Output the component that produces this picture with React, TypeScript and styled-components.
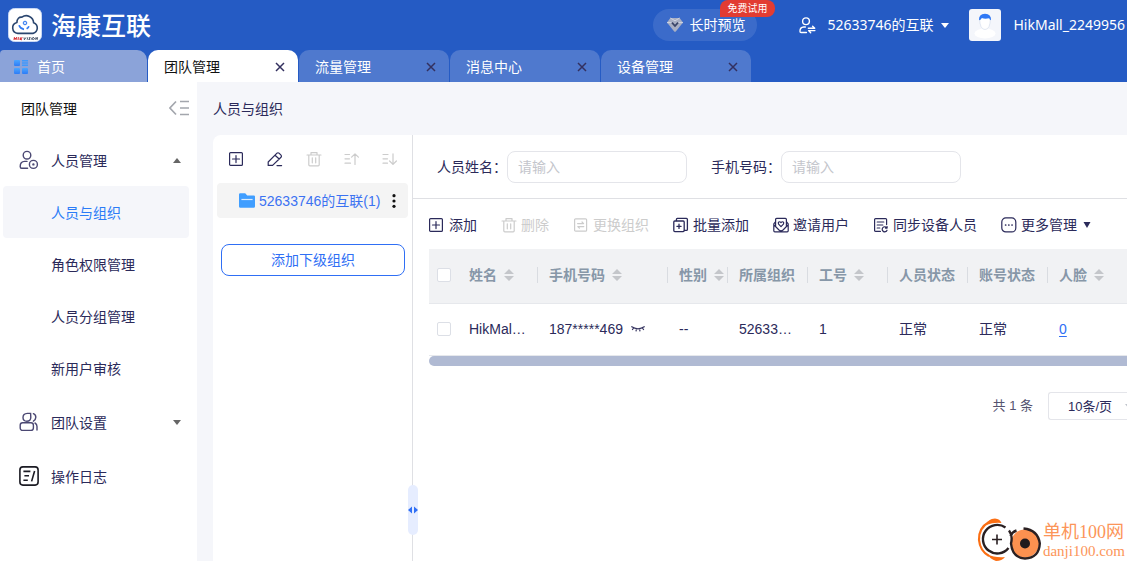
import React from "react";
import styled, { createGlobalStyle, css } from "styled-components";

const color = {
  brand: "#255bc4",
  primary: "#2f6ff5",
  ink: "#2b2a5a",
  page: "#f5f6fa",
  line: "#dfe0e4",
  disabled: "#cccccc",
  heading: "#8797a8",
};

const uiFont = '"Noto Sans", "Noto Sans CJK SC", sans-serif';
const dataFont = '"Liberation Sans", "Noto Sans CJK SC", sans-serif';

const GlobalStyle = createGlobalStyle`
  *, *::before, *::after { box-sizing: border-box; }
  body {
    margin: 0;
    font-family: ${dataFont};
    font-size: 14px;
    line-height: 20px;
    color: ${color.ink};
    background: ${color.page};
  }
  button, input, select {
    font: inherit;
    color: inherit;
    margin: 0;
  }
  button {
    padding: 0;
    border: 0;
    background: none;
    white-space: nowrap;
    cursor: pointer;
  }
  button:disabled { cursor: default; }
  svg { display: block; flex: none; }
`;

/* ---------- Icons ---------- */

type IconProps = { size?: number; children: React.ReactNode; weight?: number };

const LineIcon = ({ size = 16, weight = 1.2, children }: IconProps) => (
  <svg
    width={size}
    height={size}
    viewBox="0 0 16 16"
    fill="none"
    stroke="currentColor"
    strokeWidth={weight}
    strokeLinecap="round"
    strokeLinejoin="round"
    aria-hidden="true"
  >
    {children}
  </svg>
);

const AddIcon = () => (
  <LineIcon weight={1.2}>
    <rect x=".6" y="1.600" width="12.800" height="12.800" rx="1" />
    <path d="M7 4.600v7M3.500 8h7" />
  </LineIcon>
);

const EditIcon = () => (
  <LineIcon>
    <path d="M1.2 14.4V11L10 2.2a1.4 1.4 0 0 1 2 0l2 2a1.4 1.4 0 0 1 0 2L5.6 14.4zM8 4.2 12.2 8M10 14.6h4.6" />
  </LineIcon>
);

const TrashIcon = () => (
  <LineIcon>
    <path d="M1 4h14M5 3.800V1.600h6v2.200M2.800 4.200v9.600q0 1 1 1h8.400q1 0 1-1V4.200M6.300 6.800v5M9.700 6.800v5" />
  </LineIcon>
);

const MoveUpIcon = () => (
  <LineIcon>
    <path d="M1 3.5h4.5M1 7.8h4.5M1 12.2h5.5M11 13.4V2.8M7.6 6.2 11 2.8l3.4 3.4" />
  </LineIcon>
);

const MoveDownIcon = () => (
  <LineIcon>
    <path d="M1 3.5h5M1 7.8h4.5M1 12.2h4.5M11 2.8v10.6M7.6 10l3.4 3.4 3.4-3.4" />
  </LineIcon>
);

const SwapIcon = () => (
  <LineIcon>
    <rect x="1.6" y="1.8" width="12" height="12.4" rx="1" />
    <path d="M4.6 6.6h6L9 5M10.8 9.6h-6l1.6 1.5" />
  </LineIcon>
);

const BatchIcon = () => (
  <LineIcon weight={1.3}>
    <rect x=".8" y="4" width="10.400" height="10.600" rx="1" />
    <path d="M3.400 3.600V2.400q0-1 1-1h9q1 0 1 1v10q0 1-1 1h-2M6 7.200v4.200M3.900 9.300h4.200" />
  </LineIcon>
);

const InviteIcon = () => (
  <LineIcon>
    <path d="M2.600 9V2.400q0-1 1-1h8.800q1 0 1 1V9M2.400 5 .8 6.800v7q0 1 1 1h12.400q1 0 1-1v-7L13.600 5M1 8l5 5q2 1.800 4 0l5-5" />
    <path d="M8 9.600 5.600 7.200q-.8-1.300.2-2.200 1.100-.7 2.200.6 1.100-1.300 2.200-.6 1 .9.200 2.200z" />
  </LineIcon>
);

const SyncIcon = () => (
  <LineIcon>
    <path d="M7.400 14.400H2.600q-1 0-1-1V2.600q0-1 1-1h10q1 0 1 1v5M4.200 5h6.600M4.200 8h5.600M4.200 11h2.600" />
    <path d="M13.700 10.800a2.500 2.500 0 1 0 .3 2.400M14.100 9.600v1.500h-1.600" />
  </LineIcon>
);

const MoreIcon = () => (
  <LineIcon>
    <rect x=".8" y=".9" width="14" height="14" rx="4" />
    <path d="M4.6 8h.1M7.8 8h.1M11 8h.1" strokeWidth="1.7" />
  </LineIcon>
);

const CloseIcon = () => (
  <svg width="10" height="10" viewBox="0 0 10 10" stroke="#33305f" strokeWidth="1.5" aria-hidden="true">
    <path d="M1 1l8 8M9 1l-8 8" />
  </svg>
);

const HomeIcon = () => (
  <svg width="14" height="14" viewBox="0 0 14 14" aria-hidden="true">
    <defs>
      <linearGradient id="homeFill" x1="0" y1="0" x2="0" y2="1">
        <stop offset="0" stopColor="#4ba6ff" />
        <stop offset="1" stopColor="#2e7cf6" />
      </linearGradient>
    </defs>
    <g fill="url(#homeFill)">
      <rect width="6" height="6" rx="1" />
      <rect y="8" width="6" height="6" rx="1" />
      <rect x="8" y="8" width="6" height="6" rx="1" />
    </g>
    <path d="M8 .8h6M8 3h6M8 5.2h6" stroke="#4199fb" strokeWidth="1.4" />
  </svg>
);

const Caret = ({ up = false, width = 8 }: { up?: boolean; width?: number }) => (
  <svg width={width} height="5" viewBox="0 0 8 5" preserveAspectRatio="none" fill="currentColor" aria-hidden="true">
    <path d={up ? "M0 5 4 0l4 5z" : "M0 0h8L4 5z"} />
  </svg>
);

const DownMark = () => (
  <svg width="8" height="6" viewBox="0 0 8 6" fill="currentColor" aria-hidden="true">
    <path d="M.5 0h7L4 6z" />
  </svg>
);

const SortIcon = () => (
  <svg width="10" height="12" viewBox="0 0 10 12" fill="#c4c6ca" aria-hidden="true">
    <path d="M0 5 5 0l5 5zM0 7h10l-5 5z" />
  </svg>
);

const BrandMark = () => (
  <svg width="34" height="34" viewBox="0 0 34 34" aria-hidden="true">
    <rect x=".5" y=".5" width="33" height="33" rx="6" fill="#fff" stroke="#c9d8f4" />
    <path
      d="M9.800 25.400a5.600 5.600 0 0 1-.9-11c.1-3.600 2.300-5.600 5-5.200a7.300 7.300 0 0 1 11.700 5.500 5.600 5.600 0 0 1-.6 10.700z"
      fill="none"
      stroke="#2b466f"
      strokeWidth="1.600"
    />
    <path d="M11 17.200a6.400 6.400 0 0 0 5 4.100M18.600 20.800q1.700-1 2.300-2.600" fill="none" stroke="#2f78f0" strokeWidth="1.700" />
    <circle cx="17" cy="15" r="1.800" fill="#cfe1ff" stroke="#2f78f0" />
    <path d="M6.500 29.200 6 32M8.600 29.200 8 32M6.400 30.600h2M10.400 29.200 10 32M12.400 29.400 12 32M14.400 29.400 12.400 31l1.400 1" stroke="#d8343c" strokeWidth="1.100" fill="none" />
    <path d="M16 29.400l.4 2.400 1.600-2.400M19.600 29.400l-.4 2.400M22.600 29.600h-1.400l.8 1.800h-1.600M24 29.600l-.4 2M26 29.800a1 1 0 1 0 .1.1M27.600 31.800l.4-2.400 1.200 2.200.4-2.400" stroke="#3f4d63" strokeWidth=".9" fill="none" />
  </svg>
);

const DiamondIcon = () => (
  <svg width="16" height="16" viewBox="0 0 16 16" aria-hidden="true">
    <path d="M3.400 1h9.200L16 5.600 8.800 14.400q-.8.800-1.600 0L0 5.600z" fill="#a9b0c4" />
    <path d="M3.400 1 8 3.800 12.600 1M0 5.600h4.400M11.600 5.600H16" stroke="#cfd4e2" fill="none" />
    <path d="M5 5.600 8 9l3-3.400" stroke="#3a4568" strokeWidth="1.700" fill="none" />
  </svg>
);

const SwitchUserIcon = () => (
  <LineIcon size={17} weight={1.3}>
    <circle cx="6.6" cy="4" r="3.2" />
    <path d="M6 9.4H4.4Q1 9.6.9 13.4q0 1.2 1 1.2H7M8.8 10.6h6l-2-2M15 12.8H9l2 2" />
  </LineIcon>
);

const AvatarArt = () => (
  <svg width="32" height="32" viewBox="0 0 32 32" aria-hidden="true">
    <rect width="32" height="32" rx="3" fill="#f4f6fb" />
    <ellipse cx="16" cy="24.500" rx="10.500" ry="5" fill="#fff" />
    <path d="M10.600 9.500q.2 11 5.400 11t5.400-11q-5.400-3.500-10.800 0z" fill="#fff" stroke="#dbe2ef" strokeWidth=".8" />
    <path d="M10 11.200Q9.600 5 16 4.800 22.400 5 22 11.200q-1.400-.4-1.800-2-4.200 1-7.400-.2-.6 1.900-2.800 2.200z" fill="#2f78f5" />
  </svg>
);

const PeopleGearIcon = () => (
  <svg width="20" height="20" viewBox="0 0 20 20" fill="none" stroke="#4b4873" strokeWidth="1.4" strokeLinecap="round" aria-hidden="true">
    <circle cx="8" cy="5.200" r="3.800" />
    <path d="M8 11.400H5.600Q1.200 11.600 1.200 16.400q0 1.800 1.400 1.800h6" />
    <circle cx="14.400" cy="14.400" r="4" />
    <circle cx="14.400" cy="14.400" r=".5" fill="#4b4873" />
  </svg>
);

const TeamIcon = () => (
  <svg width="20" height="20" viewBox="0 0 20 20" fill="none" stroke="#4b4873" strokeWidth="1.400" strokeLinecap="round" aria-hidden="true">
    <path d="M11.600 1.400H8.400Q4 1.600 4 5.400t3.800 3.800q4 0 4-4z" />
    <rect x="1.200" y="10.800" width="13.200" height="7.600" rx="2.400" />
    <path d="M14.400 1.600q2.600 1 2.400 3.800-.2 2.600-2.400 3.800M16 11q2 1 2 3.600V18" />
  </svg>
);

const LogIcon = () => (
  <svg width="20" height="20" viewBox="0 0 20 20" fill="none" stroke="#1c1c24" strokeWidth="1.600" aria-hidden="true">
    <rect x=".9" y=".9" width="18.200" height="18.200" rx="3" />
    <path d="M4.400 5.400h7M5.400 9.800h4.600M4.400 14.200h4.400M15.600 5l-3 10.400" />
  </svg>
);

const CollapseIcon = () => (
  <svg width="20" height="16" viewBox="0 0 20 16" fill="none" stroke="#a3a6ad" strokeWidth="1.700" aria-hidden="true">
    <path d="M7 1.500.9 8 7 14.500M11 1.500h9M11 8h9M11 14.500h9" />
  </svg>
);

const FolderIcon = () => (
  <svg width="16" height="15" viewBox="0 0 16 15" aria-hidden="true">
    <path d="M1.200.2h5l2 2.200h6.600q1.200 0 1.200 1.200v9.800q0 1.400-1.400 1.400H1.400Q0 14.800 0 13.400V1.400Q0 .2 1.200.2z" fill="#409eff" />
    <path d="M2.400 6.500h11.200" stroke="#d9ecff" strokeWidth="1.200" />
  </svg>
);

const DotsIcon = () => (
  <svg width="4" height="14" viewBox="0 0 4 14" fill="#111" aria-hidden="true">
    <circle cx="2" cy="1.700" r="1.600" />
    <circle cx="2" cy="7" r="1.600" />
    <circle cx="2" cy="12.300" r="1.600" />
  </svg>
);

const ClosedEyeIcon = () => (
  <svg width="14" height="6" viewBox="0 0 14 6" fill="none" stroke="#35335f" strokeWidth="1.200" aria-hidden="true">
    <path d="M.3.6q6.700 4.400 13.400 0M2.600 2 1.200 4M5.400 2.800 5 5.400M8.600 2.800 9 5.400M11.400 2l1.400 2" />
  </svg>
);

const SplitArrows = () => (
  <svg width="10" height="8" viewBox="0 0 10 8" fill="#2f6ff5" aria-hidden="true">
    <path d="M4 .5v7L0 4zM6 .5v7L10 4z" />
  </svg>
);

const WatermarkArt = () => (
  <svg width="64" height="44" viewBox="0 0 64 44" fill="none" aria-hidden="true">
    <path d="M12 5Q1.500 11 2 23q1 11 10 16" stroke="#fb6f14" strokeWidth="2.200" />
    <path d="M9 8q2-6 9-6.400 5 .4 6.500 4.400-7-1-15.500 2zM10 37q8 4 18 3-3 4-9 4-6-2-9-7z" fill="#fb6f14" />
    <path d="M28.500 10.500A14.300 14.300 0 1 0 31.500 31" stroke="#2a2022" strokeWidth="2.400" />
    <circle cx="48" cy="26.500" r="14" fill="#fc9150" />
    <path d="M32 13.500q4 5 2 13 1.500 14.500 14 15 14-.5 14.800-15Q61 13 46.500 11.500M33.500 19q1.500-4 6-5.500" stroke="#2a2022" strokeWidth="2.400" />
    <path d="M20 17.500v10M15 22.500h10" stroke="#2a2022" strokeWidth="1.600" />
    <circle cx="48" cy="26.500" r="5" fill="#221b1d" />
  </svg>
);

/* ---------- Shell ---------- */

const Page = styled.div`
  position: relative;
  display: flex;
  flex-direction: column;
  min-height: 100vh;
  overflow: hidden;
`;

const TopBar = styled.header`
  display: flex;
  align-items: center;
  height: 50px;
  padding: 0 2px 0 8px;
  color: #fff;
  background: ${color.brand};
  font-family: ${uiFont};
  white-space: nowrap;
`;

const BrandName = styled.h1`
  flex: 1;
  margin: 0 0 0 9px;
  font-size: 25px;
  line-height: 32px;
  font-weight: 500;
`;

const Preview = styled.button`
  position: relative;
  display: flex;
  align-items: center;
  gap: 6px;
  height: 32px;
  margin-right: 42px;
  padding: 0 12px 0 14px;
  border-radius: 16px;
  background: rgba(255, 255, 255, 0.1);
`;

const TrialBadge = styled.span`
  position: absolute;
  top: -9px;
  right: -18px;
  height: 17px;
  padding: 0 8px 0 7px;
  border-radius: 8px 8px 8px 0;
  background: #e23c32;
  font-size: 10px;
  line-height: 17px;
`;

const TeamSwitch = styled.button`
  display: flex;
  align-items: center;
  gap: 8px;
  margin-right: 20px;

  svg:first-child { margin-right: 3px; }
`;

const Account = styled.a`
  display: flex;
  align-items: center;
  gap: 12px;
  color: inherit;
  text-decoration: none;
`;

const TabBar = styled.nav`
  display: flex;
  gap: 1px;
  height: 32px;
  background: ${color.brand};
  font-family: ${uiFont};
`;

const Tab = styled.div<{ $kind?: "home" | "active" }>`
  display: flex;
  align-items: center;
  justify-content: space-between;
  width: 150px;
  padding: 2px 13px 0 16px;
  border-radius: 10px 10px 0 0;
  color: #fff;
  background: #4f79ce;

  ${({ $kind }) =>
    $kind === "home" &&
    css`
      justify-content: flex-start;
      gap: 9px;
      width: 147px;
      padding-left: 14px;
      border-radius: 4px 10px 0 0;
      background: #8ba3d9;
    `}
  ${({ $kind }) =>
    $kind === "active" &&
    css`
      color: #111;
      background: #fff;
    `}
`;

const TabLink = styled.a`
  color: inherit;
  text-decoration: none;
`;

const Body = styled.div`
  display: flex;
  flex: 1;
  min-width: 0;
`;

/* ---------- Sidebar ---------- */

const Sidebar = styled.aside`
  flex: none;
  width: 197px;
  padding: 0 8px 0 3px;
  background: #fff;
`;

const SidebarTitle = styled.div`
  display: flex;
  align-items: center;
  justify-content: space-between;
  height: 52px;
  padding-left: 18px;
  color: #111;

  span { padding-top: 2px; }
`;

const MenuGroup = styled.button`
  display: flex;
  align-items: center;
  width: 100%;
  height: 52px;
  margin-bottom: 2px;
  padding: 0 8px 0 16px;

  span {
    flex: 1;
    padding: 2px 0 0 12px;
    text-align: left;
  }
  > svg:last-child:not(:first-child) { color: #666; }
`;

const SubMenu = styled.div`
  margin: -2px 0 2px;
`;

const SubItem = styled.a<{ $active?: boolean }>`
  display: block;
  padding: 17px 0 15px 48px;
  border-radius: 4px;
  color: ${({ $active }) => ($active ? "#2b7cf7" : color.ink)};
  background: ${({ $active }) => ($active ? color.page : "transparent")};
  text-decoration: none;
`;

/* ---------- Workspace ---------- */

const Workspace = styled.main`
  display: flex;
  flex: 1;
  flex-direction: column;
  min-width: 0;
  padding-left: 16px;
`;

const Crumb = styled.h2`
  margin: 0;
  padding: 17px 0 16px;
  font-size: 14px;
  line-height: 20px;
  font-weight: 400;
`;

const Panels = styled.div`
  display: flex;
  flex: 1;
  min-width: 0;
  border-radius: 8px 0 0 0;
  background: #fff;
`;

const TreePanel = styled.section`
  position: relative;
  flex: none;
  width: 200px;
  border-right: 1px solid ${color.line};
`;

const TreeTools = styled.div`
  display: flex;
  justify-content: space-between;
  height: 48px;
  padding: 0 14px 0 16px;
`;

const IconButton = styled.button`
  display: flex;
  align-items: center;

  &:disabled { color: ${color.disabled}; }
`;

const TreeNode = styled.div`
  display: flex;
  align-items: center;
  gap: 4px;
  height: 35px;
  margin: 0 4px;
  padding: 0 12px 0 22px;
  border-radius: 4px;
  color: #3b72f2;
  background: #f4f4f4;
  white-space: nowrap;

  span { flex: 1; }
`;

const AddChild = styled.button`
  display: block;
  width: 184px;
  height: 32px;
  margin: 26px 8px 0;
  border: 1px solid ${color.primary};
  border-radius: 8px;
  color: ${color.primary};
`;

const SplitHandle = styled.button`
  position: absolute;
  right: -6px;
  bottom: 26px;
  display: flex;
  align-items: center;
  width: 10px;
  height: 50px;
  border-radius: 5px;
  background: #e6edff;
`;

const ListPanel = styled.section`
  flex: 1;
  min-width: 0;
`;

const Filters = styled.form`
  display: flex;
  gap: 24px;
  padding: 16px 24px 15px;
  border-bottom: 1px solid ${color.line};
`;

const Field = styled.label`
  display: flex;
  align-items: center;
  white-space: nowrap;
`;

const TextBox = styled.input`
  width: 180px;
  height: 32px;
  padding: 0 10px;
  border: 1px solid #e4e5ea;
  border-radius: 8px;
  background: #fff;

  &::placeholder { color: #c4c6cc; opacity: 1; }
`;

const Actions = styled.div`
  display: flex;
  gap: 24px;
  height: 50px;
  padding: 2px 0 0 16px;
`;

const Action = styled.button`
  display: flex;
  align-items: center;
  gap: 4px;

  &:disabled { color: ${color.disabled}; }
  svg:nth-of-type(2) { margin-left: 2px; }
`;

const TableWrap = styled.div`
  margin-left: 16px;
  overflow: hidden;
`;

const Table = styled.table`
  width: 100%;
  border-collapse: separate;
  border-spacing: 0;
  table-layout: fixed;
`;

const Th = styled.th<{ $w?: number }>`
  width: ${({ $w }) => ($w ? `${$w}px` : "auto")};
  height: 55px;
  padding: 0 0 2px;
  border-bottom: 1px solid #e6e8ec;
  color: ${color.heading};
  background: #f1f2f4;
`;

const ThInner = styled.div<{ $bar: boolean }>`
  display: flex;
  align-items: center;
  gap: 7px;
  height: 16px;
  padding-left: 11px;
  border-left: 1px solid ${({ $bar }) => ($bar ? "#d9dce1" : "transparent")};
  white-space: nowrap;
`;

const Td = styled.td`
  height: 52px;
  padding: 0 0 2px 12px;
  border-bottom: 1px solid #e6e8ec;
  white-space: nowrap;
`;

const CheckTd = styled(Td)`
  padding-left: 8px;
`;

const CheckTh = styled(Th)`
  padding-left: 8px;
`;

const Check = styled.input.attrs({ type: "checkbox" })`
  display: block;
  appearance: none;
  width: 14px;
  height: 14px;
  border: 1px solid #dcdfe6;
  border-radius: 2px;
  background: #fff;
`;

const Phone = styled.div`
  display: flex;
  align-items: center;
  gap: 8px;
`;

const CountLink = styled.a`
  color: ${color.primary};
  text-underline-offset: 2px;
`;

const ScrollThumb = styled.div`
  height: 10px;
  border-radius: 5px 0 0 5px;
  background: #b0bad3;
`;

const Pager = styled.footer`
  display: flex;
  align-items: center;
  justify-content: flex-end;
  gap: 15px;
  padding-top: 26px;
  font-size: 13px;
  color: #55536f;
`;

const PageSize = styled.div`
  position: relative;
  width: 79px;
  height: 28px;
  overflow: hidden;
  color: #c0c4cc;

  select {
    appearance: none;
    width: 100%;
    height: 28px;
    padding: 2px 0 0 19px;
    border: 1px solid #e4e5ea;
    border-right: 0;
    border-radius: 3px 0 0 3px;
    color: ${color.ink};
    background: #fff;
  }
  svg {
    position: absolute;
    top: 12px;
    right: -6px;
  }
`;

const Watermark = styled.div`
  position: absolute;
  right: 2px;
  bottom: 0;
  display: flex;
  align-items: center;
  gap: 2px;
  color: #fc9559;
  font-family: "Liberation Serif", "Noto Sans CJK SC", serif;
  white-space: nowrap;
`;

const WatermarkText = styled.div`
  padding-top: 4px;
  font-size: 18px;
  line-height: 20px;

  small {
    display: block;
    font-size: 15px;
    line-height: 18px;
  }
`;

/* ---------- Data ---------- */

const tabs = ["团队管理", "流量管理", "消息中心", "设备管理"];
const subItems = ["人员与组织", "角色权限管理", "人员分组管理", "新用户审核"];

const treeTools = [
  { label: "新增", icon: <AddIcon /> },
  { label: "编辑", icon: <EditIcon /> },
  { label: "删除组织", icon: <TrashIcon />, disabled: true },
  { label: "上移", icon: <MoveUpIcon />, disabled: true },
  { label: "下移", icon: <MoveDownIcon />, disabled: true },
];

const actions = [
  { label: "添加", icon: <AddIcon /> },
  { label: "删除", icon: <TrashIcon />, disabled: true },
  { label: "更换组织", icon: <SwapIcon />, disabled: true },
  { label: "批量添加", icon: <BatchIcon /> },
  { label: "邀请用户", icon: <InviteIcon /> },
  { label: "同步设备人员", icon: <SyncIcon /> },
  { label: "更多管理", icon: <MoreIcon />, menu: true },
];

const columns = [
  { label: "姓名", width: 80, sort: true },
  { label: "手机号码", width: 130, sort: true },
  { label: "性别", width: 60, sort: true },
  { label: "所属组织", width: 80 },
  { label: "工号", width: 80, sort: true },
  { label: "人员状态", width: 80 },
  { label: "账号状态", width: 80 },
  { label: "人脸", sort: true },
];

export default function App() {
  return (
    <Page>
      <GlobalStyle />
      <TopBar>
        <BrandMark />
        <BrandName>海康互联</BrandName>
        <Preview>
          <DiamondIcon />
          长时预览
          <TrialBadge>免费试用</TrialBadge>
        </Preview>
        <TeamSwitch>
          <SwitchUserIcon />
          52633746的互联
          <Caret />
        </TeamSwitch>
        <Account href="#account">
          <AvatarArt />
          HikMall_2249956
        </Account>
      </TopBar>
      <TabBar>
        <Tab $kind="home">
          <HomeIcon />
          <TabLink href="#home">首页</TabLink>
        </Tab>
        {tabs.map((name, i) => (
          <Tab key={name} $kind={i === 0 ? "active" : undefined}>
            <TabLink href="#tab">{name}</TabLink>
            <button aria-label={`关闭${name}`}>
              <CloseIcon />
            </button>
          </Tab>
        ))}
      </TabBar>
      <Body>
        <Sidebar>
          <SidebarTitle>
            <span>团队管理</span>
            <button aria-label="收起菜单">
              <CollapseIcon />
            </button>
          </SidebarTitle>
          <MenuGroup>
            <PeopleGearIcon />
            <span>人员管理</span>
            <Caret up />
          </MenuGroup>
          <SubMenu>
            {subItems.map((name, i) => (
              <SubItem key={name} href="#menu" $active={i === 0}>
                {name}
              </SubItem>
            ))}
          </SubMenu>
          <MenuGroup>
            <TeamIcon />
            <span>团队设置</span>
            <Caret />
          </MenuGroup>
          <MenuGroup>
            <LogIcon />
            <span>操作日志</span>
          </MenuGroup>
        </Sidebar>
        <Workspace>
          <Crumb>人员与组织</Crumb>
          <Panels>
            <TreePanel>
              <TreeTools>
                {treeTools.map((tool) => (
                  <IconButton key={tool.label} aria-label={tool.label} disabled={tool.disabled}>
                    {tool.icon}
                  </IconButton>
                ))}
              </TreeTools>
              <TreeNode>
                <FolderIcon />
                <span>52633746的互联(1)</span>
                <button aria-label="更多操作">
                  <DotsIcon />
                </button>
              </TreeNode>
              <AddChild>添加下级组织</AddChild>
              <SplitHandle aria-label="调整宽度">
                <SplitArrows />
              </SplitHandle>
            </TreePanel>
            <ListPanel>
              <Filters>
                <Field>
                  人员姓名：
                  <TextBox placeholder="请输入" />
                </Field>
                <Field>
                  手机号码：
                  <TextBox placeholder="请输入" />
                </Field>
              </Filters>
              <Actions>
                {actions.map((action) => (
                  <Action key={action.label} disabled={action.disabled}>
                    {action.icon}
                    {action.label}
                    {action.menu && <DownMark />}
                  </Action>
                ))}
              </Actions>
              <TableWrap>
                <Table>
                  <thead>
                    <tr>
                      <CheckTh $w={28}>
                        <Check aria-label="全选" />
                      </CheckTh>
                      {columns.map((column, i) => (
                        <Th key={column.label} $w={column.width}>
                          <ThInner $bar={i > 0}>
                            {column.label}
                            {column.sort && <SortIcon />}
                          </ThInner>
                        </Th>
                      ))}
                    </tr>
                  </thead>
                  <tbody>
                    <tr>
                      <CheckTd>
                        <Check aria-label="选择 HikMall" />
                      </CheckTd>
                      <Td>HikMal…</Td>
                      <Td>
                        <Phone>
                          187*****469
                          <ClosedEyeIcon />
                        </Phone>
                      </Td>
                      <Td>--</Td>
                      <Td>52633…</Td>
                      <Td>1</Td>
                      <Td>正常</Td>
                      <Td>正常</Td>
                      <Td>
                        <CountLink href="#faces">0</CountLink>
                      </Td>
                    </tr>
                  </tbody>
                </Table>
                <ScrollThumb />
              </TableWrap>
              <Pager>
                <span>共 1 条</span>
                <PageSize>
                  <select aria-label="每页条数">
                    <option>10条/页</option>
                  </select>
                  <Caret />
                </PageSize>
              </Pager>
            </ListPanel>
          </Panels>
        </Workspace>
      </Body>
      <Watermark>
        <WatermarkArt />
        <WatermarkText>
          单机100网
          <small>danji100.com</small>
        </WatermarkText>
      </Watermark>
    </Page>
  );
}
